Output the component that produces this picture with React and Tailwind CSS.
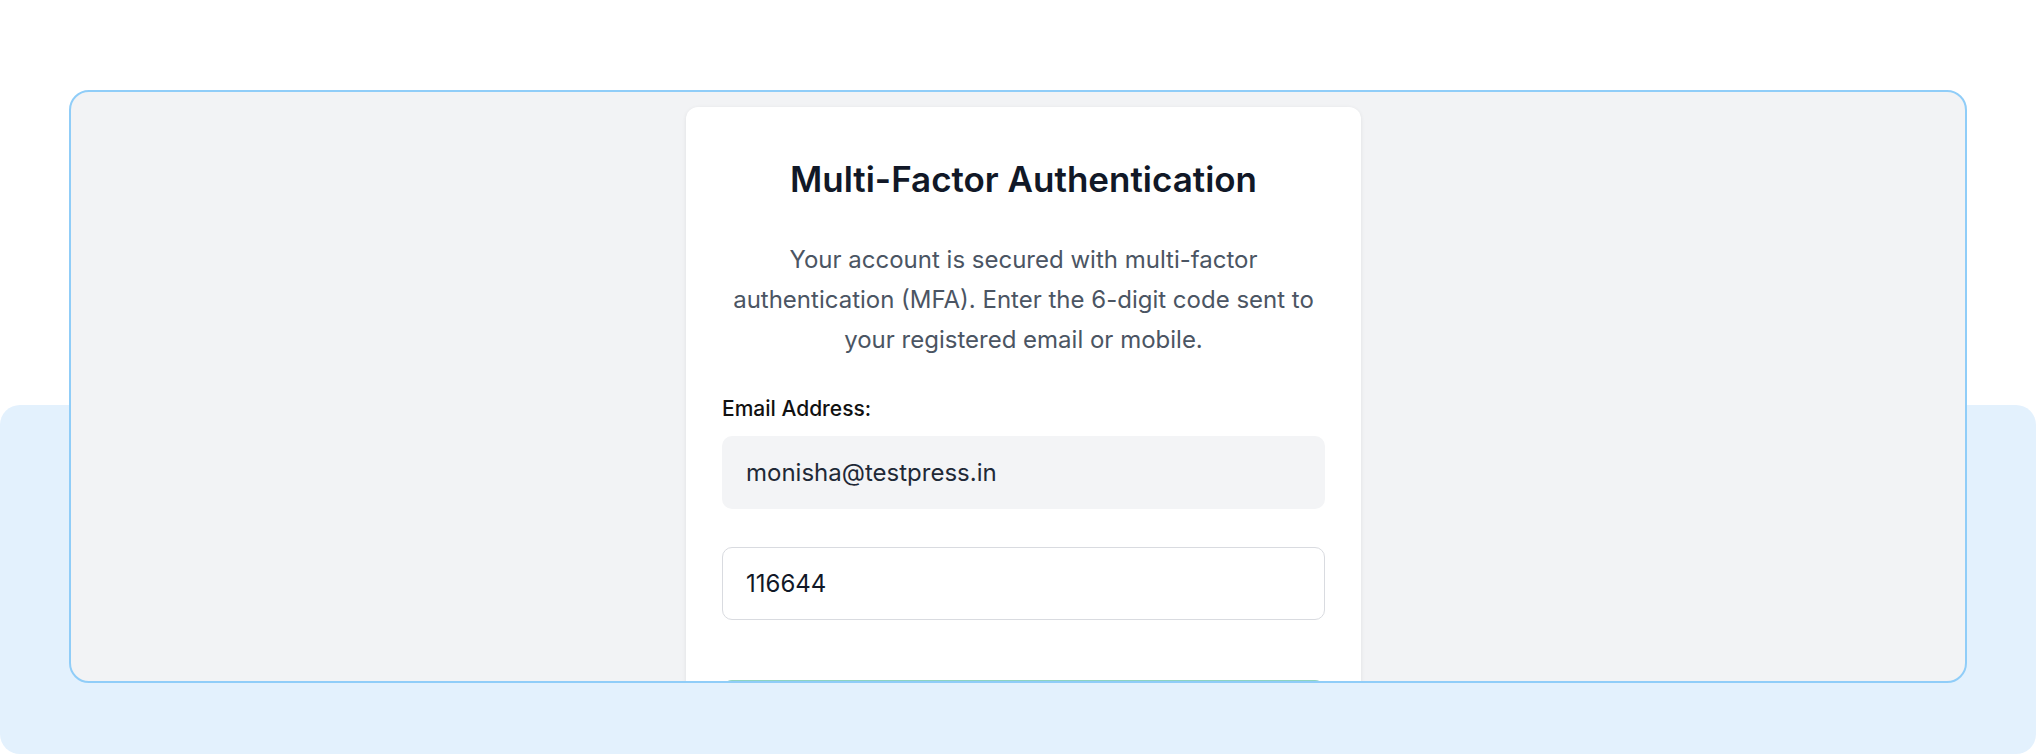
import { useState } from 'react';

const App = () => {
    const [email] = useState('monisha@testpress.in');
    const [code, setCode] = useState('116644');

    return (
        <div className="min-h-[754px] bg-white flex flex-col" style={{ fontFamily: 'Inter, "Noto Sans", sans-serif' }}>
            {/* Framed screenshot of the MFA page */}
            <div className="relative z-10 mt-[90px] mx-[69px] h-[593px] border-2 border-[#90cdf8] rounded-[20px] bg-[#f2f3f5] overflow-hidden flex justify-center pl-[11px] pt-[15px]">
                <div className="w-[675px] h-[700px] bg-white rounded-[12px] shadow-[0_1px_4px_rgba(0,0,0,0.08)] px-[36px] pt-[51px] flex flex-col">
                    <h2 className="text-center text-[35px] leading-[42px] font-semibold text-[#111827]">
                        Multi-Factor Authentication
                    </h2>
                    <p className="mt-[40px] text-center text-[24px] leading-[40px] text-[#4b5563]">
                        Your account is secured with multi-factor authentication (MFA). Enter the 6-digit code sent to your registered email or mobile.
                    </p>

                    <form className="mt-[36px] flex flex-col" onSubmit={(e) => e.preventDefault()}>
                        <label className="text-[21px] leading-[26px] font-medium text-[#111111]">Email Address:</label>
                        <input
                            className="mt-[14px] h-[73px] rounded-[10px] bg-[#f3f4f6] px-[24px] text-[24px] text-[#1f2937] outline-none"
                            value={email}
                            readOnly
                        />
                        <input
                            className="mt-[38px] h-[73px] rounded-[10px] border border-[#d9dbe0] bg-white px-[23px] text-[24px] text-[#111827] outline-none"
                            value={code}
                            onChange={(e) => setCode(e.target.value)}
                        />
                        <button
                            type="submit"
                            className="mt-[60px] h-[64px] rounded-[10px] bg-[#8fd3bf] text-white text-[22px] font-semibold"
                        >
                            Verify
                        </button>
                    </form>
                </div>
            </div>

            {/* Light blue backdrop behind the frame */}
            <div className="mt-[-278px] h-[349px] rounded-[20px] bg-[#e3f1fd]"></div>
        </div>
    );
};

export default App;
